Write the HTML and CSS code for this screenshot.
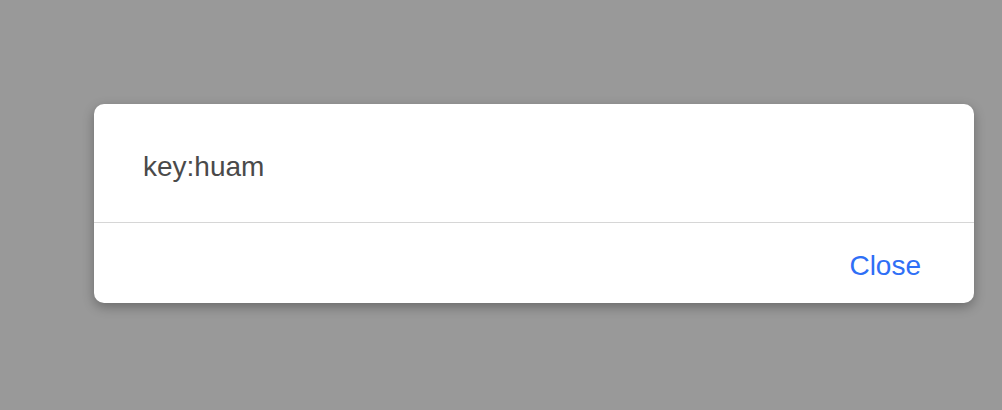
FILE: index.html
```html
<!DOCTYPE html>
<html lang="en">
<head>
  <meta charset="UTF-8" />
  <title>Dialog</title>
  <link rel="stylesheet" href="styles.css">
</head>
<body>
  <div class="overlay">
    <div class="dialog">
      <div class="dialog-body">key:huam</div>
      <div class="dialog-footer">
        <a class="btn-close" href="#">Close</a>
      </div>
    </div>
  </div>
</body>
</html>
```

FILE: styles.css
```css
* {
  margin: 0;
  padding: 0;
  box-sizing: border-box;
}

body {
  font-family: 'Liberation Sans', Arial, sans-serif;
  background-color: #999999;
  min-height: 100vh;
}

.overlay {
  padding: 104px 0 0 94px;
}

/* Caixa do diálogo */
.dialog {
  width: 880px;
  background: #fff;
  border-radius: 10px;
  box-shadow: 0 4px 12px rgba(0, 0, 0, 0.3);
  overflow: hidden;
}

.dialog-body {
  font-size: 28px;
  line-height: 34px;
  color: #4a4a4a;
  padding: 46px 49px 38px;
  border-bottom: 1px solid #d6d6d6;
}

.dialog-footer {
  display: flex;
  justify-content: flex-end;
  padding: 26px 53px 20px;
}

.btn-close {
  font-size: 28px;
  line-height: 34px;
  color: #2f6ff6;
  text-decoration: none;
}
```
